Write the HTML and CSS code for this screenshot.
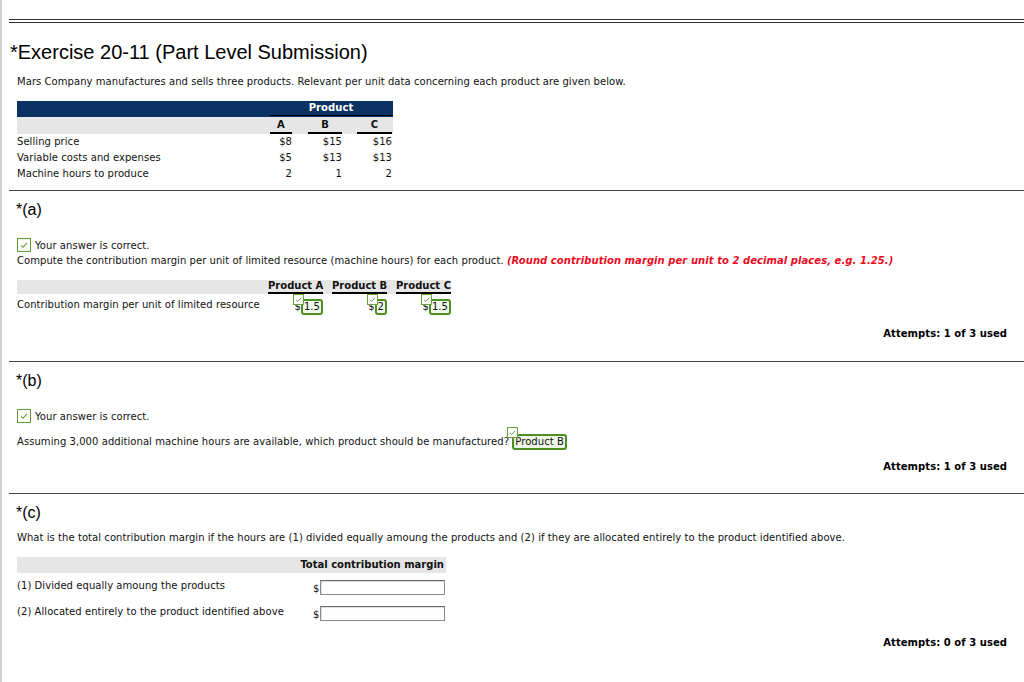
FILE: index.html
```html
<!DOCTYPE html>
<html>
<head>
<meta charset="utf-8">
<title>Exercise 20-11</title>
<link rel="stylesheet" href="styles.css">
</head>
<body>
<div class="page">
  <div class="double-rule"></div>
  <h1 class="title">*Exercise 20-11 (Part Level Submission)</h1>
  <div class="content">
    <p class="intro">Mars Company manufactures and sells three products. Relevant per unit data concerning each product are given below.</p>
    <div class="data-table">
      <div class="dt-head"><span></span><span class="dt-product">Product</span></div>
      <div class="dt-sub">
        <span></span>
        <span class="dt-col"><b class="ul">A</b></span>
        <span class="dt-col"><b class="ul ul-b">B</b></span>
        <span class="dt-col"><b class="ul ul-c">C</b></span>
      </div>
      <div class="dt-row"><span>Selling price</span><span class="num">$8</span><span class="num">$15</span><span class="num">$16</span></div>
      <div class="dt-row"><span>Variable costs and expenses</span><span class="num">$5</span><span class="num">$13</span><span class="num">$13</span></div>
      <div class="dt-row"><span>Machine hours to produce</span><span class="num">2</span><span class="num">1</span><span class="num">2</span></div>
    </div>
  </div>

  <section class="part part-a">
    <h2 class="part-title">*(a)</h2>
    <div class="correct">
      <svg class="check" width="14" height="14" viewBox="0 0 14 14"><rect x="0.5" y="0.5" width="13" height="13" fill="#fff" stroke="#5e9a35"/><path d="M4 7.3 L6 9.3 L10 4.9" fill="none" stroke="#5e9a35" stroke-width="1.1"/></svg>
      <span>Your answer is correct.</span>
    </div>
    <p class="question">Compute the contribution margin per unit of limited resource (machine hours) for each product. <em class="hint">(Round contribution margin per unit to 2 decimal places, e.g. 1.25.)</em></p>
    <div class="cm-table">
      <div class="cm-head">
        <span></span>
        <span class="cm-h">Product A</span>
        <span class="cm-h cm-shift">Product B</span>
        <span class="cm-h cm-shift">Product C</span>
      </div>
      <div class="cm-row">
        <span class="cm-label">Contribution margin per unit of limited resource</span>
        <span class="cm-cell"><span class="answer">$<span class="ans-box">1.5</span><svg class="mini-check" width="11" height="11" viewBox="0 0 11 11"><rect x="0.5" y="0.5" width="10" height="10" fill="#fff" stroke="#6aa23e"/><path d="M3 5.8 L4.7 7.4 L8 3.9" fill="none" stroke="#6aa23e" stroke-width="1"/></svg></span></span>
        <span class="cm-cell"><span class="answer">$<span class="ans-box">2</span><svg class="mini-check" width="11" height="11" viewBox="0 0 11 11"><rect x="0.5" y="0.5" width="10" height="10" fill="#fff" stroke="#6aa23e"/><path d="M3 5.8 L4.7 7.4 L8 3.9" fill="none" stroke="#6aa23e" stroke-width="1"/></svg></span></span>
        <span class="cm-cell"><span class="answer">$<span class="ans-box">1.5</span><svg class="mini-check" width="11" height="11" viewBox="0 0 11 11"><rect x="0.5" y="0.5" width="10" height="10" fill="#fff" stroke="#6aa23e"/><path d="M3 5.8 L4.7 7.4 L8 3.9" fill="none" stroke="#6aa23e" stroke-width="1"/></svg></span></span>
      </div>
    </div>
    <div class="attempts attempts-a">Attempts: 1 of 3 used</div>
  </section>

  <section class="part part-b">
    <h2 class="part-title">*(b)</h2>
    <div class="correct">
      <svg class="check" width="14" height="14" viewBox="0 0 14 14"><rect x="0.5" y="0.5" width="13" height="13" fill="#fff" stroke="#5e9a35"/><path d="M4 7.3 L6 9.3 L10 4.9" fill="none" stroke="#5e9a35" stroke-width="1.1"/></svg>
      <span>Your answer is correct.</span>
    </div>
    <p class="question question-b">Assuming 3,000 additional machine hours are available, which product should be manufactured? <span class="answer answer-b"><span class="ans-box">Product B</span><svg class="mini-check mini-check-b" width="11" height="11" viewBox="0 0 11 11"><rect x="0.5" y="0.5" width="10" height="10" fill="#fff" stroke="#6aa23e"/><path d="M3 5.8 L4.7 7.4 L8 3.9" fill="none" stroke="#6aa23e" stroke-width="1"/></svg></span></p>
    <div class="attempts attempts-b">Attempts: 1 of 3 used</div>
  </section>

  <section class="part part-c">
    <h2 class="part-title">*(c)</h2>
    <p class="question question-c">What is the total contribution margin if the hours are (1) divided equally amoung the products and (2) if they are allocated entirely to the product identified above.</p>
    <div class="tc-table">
      <div class="tc-head"><span></span><span class="tc-h">Total contribution margin</span></div>
      <div class="tc-row"><span class="tc-label">(1) Divided equally amoung the products</span><span class="tc-cell">$<span class="tc-input"></span></span></div>
      <div class="tc-row"><span class="tc-label">(2) Allocated entirely to the product identified above</span><span class="tc-cell">$<span class="tc-input"></span></span></div>
    </div>
    <div class="attempts attempts-c">Attempts: 0 of 3 used</div>
  </section>
</div>
</body>
</html>
```

FILE: styles.css
```css
* { box-sizing: border-box; }
html, body { margin: 0; padding: 0; background: #fff; }
body {
  font-family: "DejaVu Sans", Verdana, sans-serif;
  font-size: 10px;
  color: #111;
  letter-spacing: 0.06px;
  overflow: hidden;
}
.page {
  border-left: 2px solid #d2d2d2;
  padding-left: 7px;
  padding-top: 19px;
  min-height: 682px;
}
.double-rule {
  height: 4px;
  border-top: 1px solid #333;
  border-bottom: 1px solid #333;
}
.title {
  font-family: "Liberation Sans", Arial, sans-serif;
  font-weight: normal;
  font-size: 20px;
  line-height: 24px;
  margin: 17px 0 0 1px;
  color: #000;
  letter-spacing: 0;
}
.content { padding-left: 8px; }
.intro { margin: 10px 0 0; line-height: 16px; }

/* product data table */
.data-table { width: 376px; margin-top: 11px; }
.dt-head {
  background: #0b3262;
  height: 16px;
  display: grid;
  grid-template-columns: 253px 122px;
}
.dt-product {
  color: #fff;
  font-weight: bold;
  text-align: center;
  line-height: 14px;
  height: 15px;
  border-bottom: 1px solid #000;
}
.dt-sub {
  background: #e6e6e6;
  height: 17px;
  padding-top: 1px;
  display: grid;
  grid-template-columns: 253px 22px 50px 50px;
}
.dt-col { text-align: center; }
.ul {
  display: block;
  line-height: 14px;
  border-bottom: 2px solid #000;
  text-align: center;
}
.ul-b { margin-left: 16px; }
.ul-c { margin-left: 15px; }
.dt-row {
  display: grid;
  grid-template-columns: 253px 22px 50px 50px;
  line-height: 16px;
}
.num { text-align: right; }

/* parts */
.part {
  border-top: 1px solid #444;
  padding: 0 17px 0 8px;
}
.part-a { margin-top: 8px; padding-bottom: 19px; }
.part-b { padding-bottom: 18px; }
.part-title {
  font-family: "Liberation Sans", Arial, sans-serif;
  font-weight: normal;
  font-size: 16px;
  line-height: 20px;
  margin: 9px 0 0 -1px;
  color: #000;
  letter-spacing: 0;
}
.correct {
  display: flex;
  align-items: center;
  gap: 4px;
  height: 16px;
  margin-top: 17px;
}
.check { display: block; flex: none; }
.question { margin: 0; line-height: 16px; }
.hint { color: #ee0a1e; font-weight: bold; font-style: italic; }

/* contribution margin table */
.cm-table { width: 434px; margin-top: 11px; }
.cm-head {
  background: #e6e6e6;
  height: 14px;
  display: grid;
  grid-template-columns: 251px 55px 64px 64px;
}
.cm-h {
  font-weight: bold;
  line-height: 12px;
  border-bottom: 2px solid #000;
  text-align: center;
  white-space: nowrap;
  letter-spacing: 0;
}
.cm-shift { margin-left: 9px; }
.cm-row {
  display: grid;
  grid-template-columns: 251px 55px 64px 64px;
  height: 25px;
  align-items: start;
}
.cm-label { line-height: 16px; margin-top: 3px; white-space: nowrap; }
.cm-cell { text-align: right; margin-top: 5px; }
.answer { position: relative; display: inline-block; line-height: 16px; }
.ans-box {
  display: inline-block;
  vertical-align: top;
  border: 2px solid #4f8f22;
  border-radius: 3px;
  background: #eef7e6;
  line-height: 12px;
  padding: 0 1px;
  color: #111;
}
.mini-check { position: absolute; top: -5px; left: -1px; display: block; }
.mini-check-b { top: -7px; left: -5px; }
.question-b { margin-top: 10px; }
.answer-b { vertical-align: top; }

.attempts {
  text-align: right;
  font-weight: bold;
  line-height: 16px;
  color: #000;
}
.attempts-a { margin-top: 7px; }
.attempts-b { margin-top: 9px; }
.attempts-c { margin-top: 10px; }

/* total contribution table */
.question-c { margin-top: 7px; }
.tc-table { width: 429px; margin-top: 11px; }
.tc-head {
  background: #e6e6e6;
  height: 16px;
  display: grid;
  grid-template-columns: 280px 149px;
}
.tc-h { font-weight: bold; text-align: right; line-height: 16px; padding-right: 2px; white-space: nowrap; letter-spacing: 0; }
.tc-row {
  display: grid;
  grid-template-columns: 296px 133px;
  height: 26px;
  align-items: start;
}
.tc-label { line-height: 16px; margin-top: 5px; white-space: nowrap; }
.tc-cell { display: flex; align-items: flex-end; margin-top: 7px; line-height: 12px; }
.tc-input {
  display: block;
  width: 125px;
  height: 15px;
  border: 1px solid #8a8a8a;
  border-top-color: #6a6a6a;
  box-shadow: inset 1px 1px 1px rgba(0,0,0,0.15);
  margin-left: 1px;
  background: #fff;
}
```
